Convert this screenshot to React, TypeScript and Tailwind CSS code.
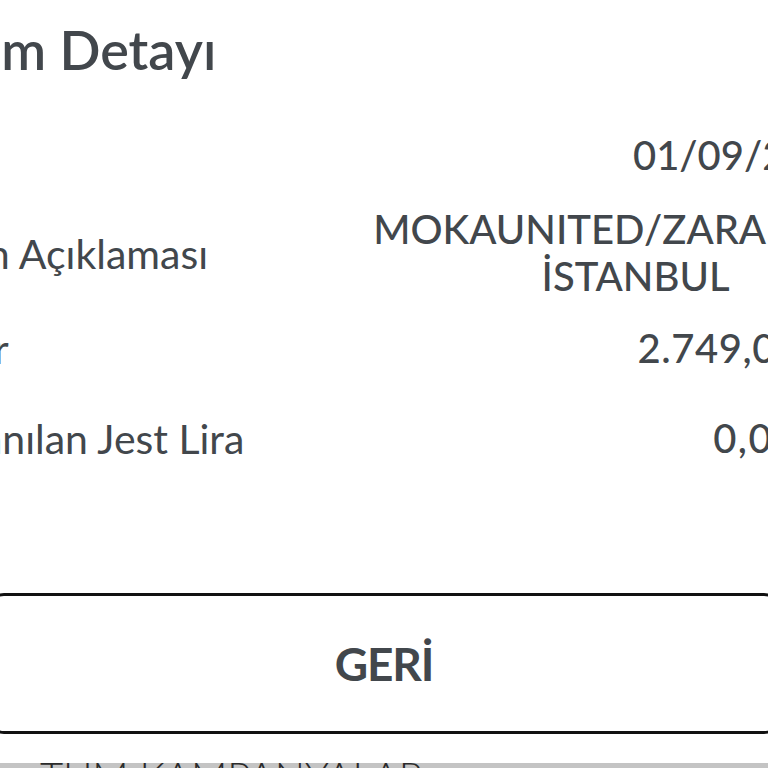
import React from 'react'

interface DetailRow {
  label: string
  value: React.ReactNode
  top: string
  labelClass?: string
  valueClass?: string
}

const rows: DetailRow[] = [
  { label: 'Tarih', value: '01/09/2023', top: 'mt-0', labelClass: '-ml-[12px]' },
  {
    label: 'İşlem Açıklaması',
    value: (
      <span className="block text-center">
        MOKAUNITED/ZARA HOME
        <br />
        İSTANBUL
      </span>
    ),
    top: 'mt-[27px]',
    valueClass: '-mr-[43px]',
  },
  { label: 'Tutar', value: '2.749,00 TL', top: 'mt-[25px]', valueClass: 'tracking-[0.6px]' },
  { label: 'Kazanılan Jest Lira', value: '0,00 TL', top: 'mt-[43px]', valueClass: 'tracking-[1.4px]' },
]

export default function App() {
  return (
    <div className="w-[768px] h-[768px] overflow-hidden bg-white flex flex-col text-[#42474c] font-['Lato',sans-serif]">
      {/* Dialog body, wider than the viewport */}
      <div className="ml-[-84px] w-[939px] shrink-0">
        <h1 className="ml-[5px] mt-[17px] text-[54px] leading-[66px] font-semibold whitespace-nowrap">
          İşlem Detayı
        </h1>

        <div className="mt-[49px] flex flex-col">
          {rows.map((row) => (
            <div key={row.label} className={`flex items-center justify-between ${row.top}`}>
              <span className={`text-[41px] leading-[47px] font-normal whitespace-nowrap ${row.labelClass ?? ''}`}>
                {row.label}
              </span>
              <span className={`text-[40px] leading-[47px] font-medium whitespace-nowrap ${row.valueClass ?? ''}`}>
                {row.value}
              </span>
            </div>
          ))}
        </div>
      </div>

      {/* Back button */}
      <button className="mt-[131px] ml-[-12px] w-[792px] h-[141px] shrink-0 border-[3px] border-[#111] rounded-2xl bg-white flex items-center justify-center">
        <span className="text-[46px] font-bold text-[#42474c] tracking-tight">GERİ</span>
      </button>

      {/* Page behind the dialog */}
      <div className="mt-[29px] flex-1 bg-[#c4c4c4] overflow-hidden">
        <div className="pl-[40px] text-[40px] leading-[26px] font-light text-[#2b2b2b] whitespace-nowrap">
          TÜM KAMPANYALAR
        </div>
      </div>
    </div>
  )
}
